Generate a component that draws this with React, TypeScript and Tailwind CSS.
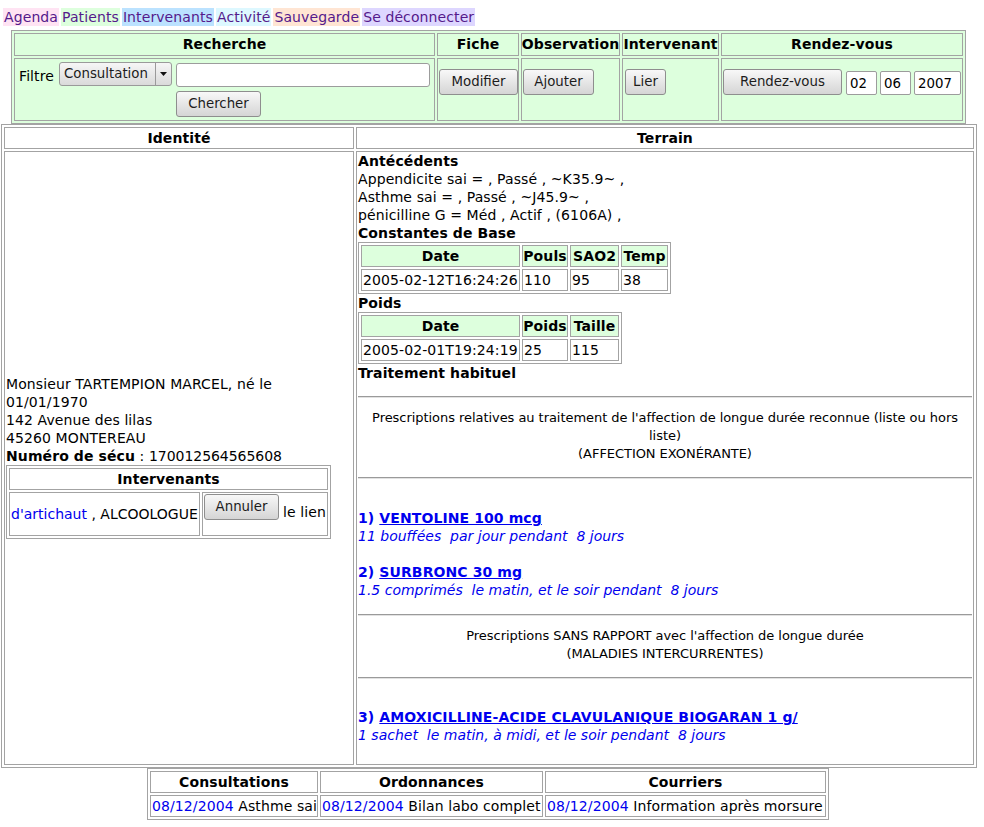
import React from 'react'

const navItems = [
  { label: 'Agenda', bg: 'bg-[#ffe3f3]' },
  { label: 'Patients', bg: 'bg-[#ddffdd]' },
  { label: 'Intervenants', bg: 'bg-[#bbe2ff]' },
  { label: 'Activité', bg: 'bg-[#ddf8ff]' },
  { label: 'Sauvegarde', bg: 'bg-[#ffe5d3]' },
  { label: 'Se déconnecter', bg: 'bg-[#ddd6ff]' },
]

const th = 'border border-[#a3a3a3] font-bold flex items-center justify-center whitespace-nowrap pb-[1px]'
const td = 'border border-[#a3a3a3] flex items-center pl-[1px] pb-[1px] whitespace-nowrap'
const btn =
  'h-[26px] rounded-[3px] border border-[#8e8e8e] bg-linear-to-b from-[#f8f8f8] to-[#d5d5d5] text-[13.33px] leading-none tracking-normal text-[#1c1c1c] flex items-center justify-center shrink-0'
const field =
  'h-[24px] rounded-[2px] border border-[#9c9c9c] bg-white pl-[3px] text-[13.33px] tracking-normal text-black outline-none shrink-0'

function Hr({ className = '' }: { className?: string }) {
  return <div className={`h-[2px] border-t border-t-[#9a9a9a] border-b border-b-[#e2e2e2] ${className}`} />
}

function Toolbar() {
  return (
    <div className="ml-[11px] mt-[4px] w-[955px] border border-[#a3a3a3] bg-[#ddffdd] p-[2px] grid grid-cols-[421px_82px_99px_97px_242px] grid-rows-[23px_63px] gap-[2px]">
      <div className={th}>Recherche</div>
      <div className={th}>Fiche</div>
      <div className={th}>Observation</div>
      <div className={th}>Intervenant</div>
      <div className={th}>Rendez-vous</div>

      {/* Recherche */}
      <div className="border border-[#a3a3a3] flex flex-col">
        <div className="flex items-start mt-[3px] pl-[4px]">
          <span className="mt-[5px] w-[36px] shrink-0">Filtre</span>
          <div className="ml-[4px] w-[113px] h-[24px] shrink-0 rounded-[3px] border border-[#9a9a9a] bg-linear-to-b from-[#f6f6f6] to-[#dadada] flex items-stretch text-[13.33px] tracking-normal text-[#1c1c1c]">
            <span className="flex-1 flex items-center pl-[4px]">Consultation</span>
            <span className="w-[16px] border-l border-[#9a9a9a] flex items-center justify-center">
              <svg width="7" height="4" viewBox="0 0 7 4">
                <path d="M0 0 L7 0 L3.5 4 Z" fill="#111" />
              </svg>
            </span>
          </div>
          <input readOnly value="" className={`${field} ml-[4px] w-[254px] h-[23px] mt-[1px] rounded-[3px]`} />
        </div>
        <button className={`${btn} ml-[161px] mt-[4px] w-[85px]`}>Chercher</button>
      </div>

      <div className="border border-[#a3a3a3] flex items-start">
        <button className={`${btn} ml-[1px] mt-[10px] w-[79px]`}>Modifier</button>
      </div>
      <div className="border border-[#a3a3a3] flex items-start">
        <button className={`${btn} ml-[1px] mt-[10px] w-[71px]`}>Ajouter</button>
      </div>
      <div className="border border-[#a3a3a3] flex items-start">
        <button className={`${btn} ml-[2px] mt-[10px] w-[41px]`}>Lier</button>
      </div>
      <div className="border border-[#a3a3a3] flex items-start">
        <button className={`${btn} ml-[1px] mt-[10px] w-[119px]`}>Rendez-vous</button>
        <input readOnly value="02" className={`${field} ml-[4px] mt-[12px] w-[31px]`} />
        <input readOnly value="06" className={`${field} ml-[3px] mt-[12px] w-[31px]`} />
        <input readOnly value="2007" className={`${field} ml-[3px] mt-[12px] w-[47px]`} />
      </div>
    </div>
  )
}

function Identity() {
  return (
    <div className="border border-[#a3a3a3] px-[1px] pb-[2px] flex flex-col justify-center">
      <div>
        Monsieur TARTEMPION MARCEL, né le 01/01/1970
        <br />
        142 Avenue des lilas
        <br />
        45260 MONTEREAU
        <br />
        <b>Numéro de sécu</b> : <span className="tracking-[-0.05px]">170012564565608</span>
      </div>
      <div className="w-[325px] border border-[#a3a3a3] p-[2px] grid grid-cols-[191px_126px] grid-rows-[22px_44px] gap-[2px]">
        <div className={`${th} col-span-2`}>Intervenants</div>
        <div className={`${td} tracking-normal`}>
          <span className="text-[#0000ee]">d'artichaut</span>&nbsp;, ALCOOLOGUE
        </div>
        <div className="border border-[#a3a3a3] flex items-start pl-[1px] whitespace-nowrap">
          <button className={`${btn} mt-[1px] h-[25px] w-[75px]`}>Annuler</button>
          <span className="ml-[4px] mt-[10px]">le lien</span>
        </div>
      </div>
    </div>
  )
}

function DataTable({ cols, headers, row }: { cols: string; headers: string[]; row: string[] }) {
  return (
    <div className={`border border-[#a3a3a3] p-[2px] grid ${cols} grid-rows-[22px_22px] gap-[2px] w-fit`}>
      {headers.map(h => (
        <div key={h} className={`${th} bg-[#ddffdd]`}>
          {h}
        </div>
      ))}
      {row.map((v, i) => (
        <div key={i} className={td}>
          {v}
        </div>
      ))}
    </div>
  )
}

function Prescription({ n, name, posology }: { n: number; name: string; posology: string }) {
  return (
    <div className="text-[#0000ee]">
      <div className="font-bold">
        {n}) <span className="underline">{name}</span>
      </div>
      <div className="italic whitespace-pre tracking-normal">{posology}</div>
    </div>
  )
}

function Terrain() {
  return (
    <div className="border border-[#a3a3a3] px-[1px]">
      <div className="font-bold">Antécédents</div>
      <div>Appendicite sai = , Passé , ~K35.9~ ,</div>
      <div>Asthme sai = , Passé , ~J45.9~ ,</div>
      <div>pénicilline G = Méd , Actif , (6106A) ,</div>
      <div className="font-bold">Constantes de Base</div>
      <DataTable
        cols="grid-cols-[159px_46px_49px_47px]"
        headers={['Date', 'Pouls', 'SAO2', 'Temp']}
        row={['2005-02-12T16:24:26', '110', '95', '38']}
      />
      <div className="font-bold">Poids</div>
      <DataTable
        cols="grid-cols-[159px_46px_49px]"
        headers={['Date', 'Poids', 'Taille']}
        row={['2005-02-01T19:24:19', '25', '115']}
      />
      <div className="font-bold">Traitement habituel</div>

      <Hr className="mt-[14px]" />
      <div className="text-[13px] leading-[18px] tracking-[-0.05px] text-center pt-[11px] pb-[14px]">
        Prescriptions relatives au traitement de l'affection de longue durée reconnue (liste ou hors liste)
        <br />
        (AFFECTION EXONÉRANTE)
      </div>
      <Hr />

      <div className="pt-[30px]">
        <Prescription n={1} name="VENTOLINE 100 mcg" posology="11 bouffées  par jour pendant  8 jours" />
        <div className="h-[18px]" />
        <Prescription n={2} name="SURBRONC 30 mg" posology="1.5 comprimés  le matin, et le soir pendant  8 jours" />
      </div>

      <Hr className="mt-[15px]" />
      <div className="text-[13px] leading-[18px] tracking-[-0.05px] text-center pt-[11px] pb-[14px]">
        Prescriptions SANS RAPPORT avec l'affection de longue durée
        <br />
        (MALADIES INTERCURRENTES)
      </div>
      <Hr />

      <div className="pt-[29px]">
        <Prescription
          n={3}
          name="AMOXICILLINE-ACIDE CLAVULANIQUE BIOGARAN 1 g/"
          posology="1 sachet  le matin, à midi, et le soir pendant  8 jours"
        />
      </div>
    </div>
  )
}

const documents = [
  { title: 'Consultations', date: '08/12/2004', label: 'Asthme sai' },
  { title: 'Ordonnances', date: '08/12/2004', label: 'Bilan labo complet' },
  { title: 'Courriers', date: '08/12/2004', label: 'Information après morsure' },
]

export default function App() {
  return (
    <div className="min-h-screen bg-white text-black font-['DejaVu_Sans',sans-serif] text-[14px] leading-[18px] tracking-[0.1px]">
      <nav className="flex gap-[2px] pl-[3px] pt-[8px]">
        {navItems.map(item => (
          <span key={item.label} className={`${item.bg} px-[1px] h-[18px] text-[#551a8b]`}>
            {item.label}
          </span>
        ))}
      </nav>

      <Toolbar />

      <div className="ml-[1px] w-[976px] border border-[#a3a3a3] p-[2px] grid grid-cols-[350px_618px] grid-rows-[22px_614px] gap-[2px]">
        <div className={th}>Identité</div>
        <div className={th}>Terrain</div>
        <Identity />
        <Terrain />
      </div>

      <div className="ml-[147px] w-[682px] border border-[#a3a3a3] p-[2px] grid grid-cols-[168px_223px_281px] grid-rows-[22px_22px] gap-[2px]">
        {documents.map(d => (
          <div key={d.title} className={th}>
            {d.title}
          </div>
        ))}
        {documents.map(d => (
          <div key={d.title} className={td}>
            <span className="text-[#0000ee]">{d.date}</span>&nbsp;{d.label}
          </div>
        ))}
      </div>
    </div>
  )
}
